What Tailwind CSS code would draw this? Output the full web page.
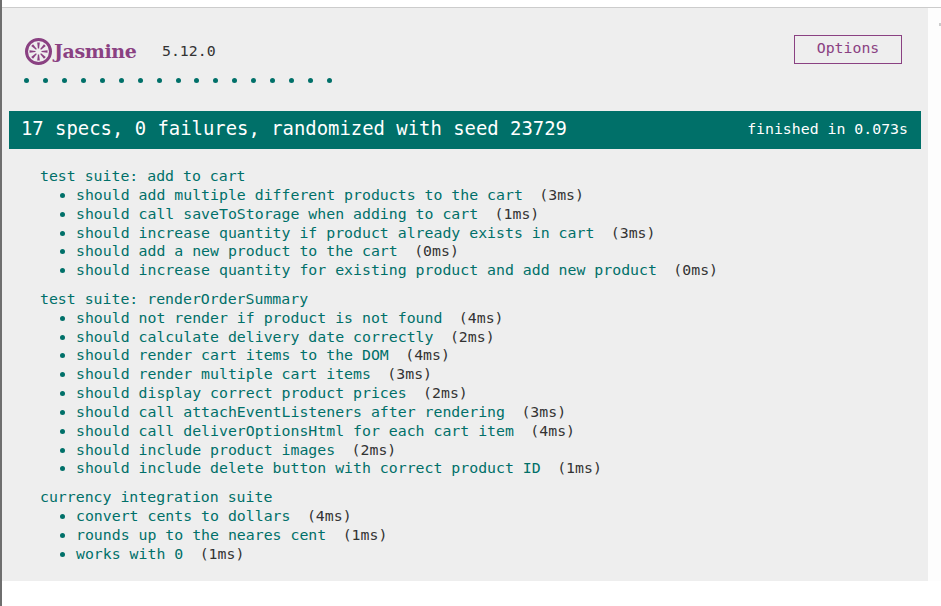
<!DOCTYPE html>
<html>
<head>
<meta charset="utf-8">
<script src="https://cdn.jsdelivr.net/npm/@tailwindcss/browser@4"></script>
</head>
<body class="bg-white">
<div class="h-[606px] w-[941px] overflow-hidden flex bg-white font-['DejaVu_Sans_Mono',monospace] text-[14.85px] leading-[18.85px] text-[#333]">
  <div class="w-[2px] bg-[#6e6e6e] shrink-0"></div>
  <div class="flex-1 flex flex-col pt-[7px]">
    <div class="flex border-t border-[#ccc]">
      <main class="w-[926px] h-[573px] bg-[#eee] px-[7px]">
        <header class="flex justify-between h-[103px] pl-[15px] pr-[19px] pt-[27px]">
          <div class="pt-[1px]">
            <div class="flex items-center h-[30px]">
              <svg width="28" height="28" viewBox="0 0 28 28" class="shrink-0 translate-x-[0.5px] translate-y-[0.5px]">
                <circle cx="14" cy="14" r="12" fill="none" stroke="#8a4182" stroke-width="3"/>
                <g fill="#8a4182">
                  <path d="M12.7 5 H15.3 L14.6 11 H13.4 Z"/>
                  <path d="M12.7 5 H15.3 L14.6 11 H13.4 Z" transform="rotate(45 14 14)"/>
                  <path d="M12.7 5 H15.3 L14.6 11 H13.4 Z" transform="rotate(90 14 14)"/>
                  <path d="M12.7 5 H15.3 L14.6 11 H13.4 Z" transform="rotate(135 14 14)"/>
                  <path d="M12.7 5 H15.3 L14.6 11 H13.4 Z" transform="rotate(180 14 14)"/>
                  <path d="M12.7 5 H15.3 L14.6 11 H13.4 Z" transform="rotate(225 14 14)"/>
                  <path d="M12.7 5 H15.3 L14.6 11 H13.4 Z" transform="rotate(270 14 14)"/>
                  <path d="M12.7 5 H15.3 L14.6 11 H13.4 Z" transform="rotate(315 14 14)"/>
                </g>
              </svg>
              <span class="ml-[1px] pl-[1px] w-[109px] font-['DejaVu_Serif',serif] font-bold text-[19px] tracking-[-0.4px] text-[#8a4182]">Jasmine</span>
              <span>5.12.0</span>
            </div>
            <ul class="flex gap-[13.95px] mt-[12px]">
              <li class="size-[5px] rounded-full bg-[#007069]"></li><li class="size-[5px] rounded-full bg-[#007069]"></li><li class="size-[5px] rounded-full bg-[#007069]"></li><li class="size-[5px] rounded-full bg-[#007069]"></li><li class="size-[5px] rounded-full bg-[#007069]"></li><li class="size-[5px] rounded-full bg-[#007069]"></li><li class="size-[5px] rounded-full bg-[#007069]"></li><li class="size-[5px] rounded-full bg-[#007069]"></li><li class="size-[5px] rounded-full bg-[#007069]"></li><li class="size-[5px] rounded-full bg-[#007069]"></li><li class="size-[5px] rounded-full bg-[#007069]"></li><li class="size-[5px] rounded-full bg-[#007069]"></li><li class="size-[5px] rounded-full bg-[#007069]"></li><li class="size-[5px] rounded-full bg-[#007069]"></li><li class="size-[5px] rounded-full bg-[#007069]"></li><li class="size-[5px] rounded-full bg-[#007069]"></li><li class="size-[5px] rounded-full bg-[#007069]"></li>
            </ul>
          </div>
          <button class="w-[108px] h-[29px] pb-[2px] border border-[#8a4182] text-[#8a4182] text-center">Options</button>
        </header>
        <div class="h-[38px] bg-[#007069] text-white flex items-center justify-between pl-[12px] pr-[13px]">
          <span class="text-[18.9px] pb-[4px] whitespace-pre">17 specs, 0 failures, randomized with seed 23729</span>
          <span class="pb-[2px]">finished in 0.073s</span>
        </div>
        <section class="pt-[18px] pl-[31px] text-[#007069]">
          <div class="mb-[9.8px]">
            <h2>test suite: add to cart</h2>
            <ul class="ml-[36px] list-disc">
              <li>should add multiple different products to the cart <span class="text-[#333] ml-[7.5px]">(3ms)</span></li>
              <li>should call saveToStorage when adding to cart <span class="text-[#333] ml-[7.5px]">(1ms)</span></li>
              <li>should increase quantity if product already exists in cart <span class="text-[#333] ml-[7.5px]">(3ms)</span></li>
              <li>should add a new product to the cart <span class="text-[#333] ml-[7.5px]">(0ms)</span></li>
              <li>should increase quantity for existing product and add new product <span class="text-[#333] ml-[7.5px]">(0ms)</span></li>
            </ul>
          </div>
          <div class="mb-[9.8px]">
            <h2>test suite: renderOrderSummary</h2>
            <ul class="ml-[36px] list-disc">
              <li>should not render if product is not found <span class="text-[#333] ml-[7.5px]">(4ms)</span></li>
              <li>should calculate delivery date correctly <span class="text-[#333] ml-[7.5px]">(2ms)</span></li>
              <li>should render cart items to the DOM <span class="text-[#333] ml-[7.5px]">(4ms)</span></li>
              <li>should render multiple cart items <span class="text-[#333] ml-[7.5px]">(3ms)</span></li>
              <li>should display correct product prices <span class="text-[#333] ml-[7.5px]">(2ms)</span></li>
              <li>should call attachEventListeners after rendering <span class="text-[#333] ml-[7.5px]">(3ms)</span></li>
              <li>should call deliverOptionsHtml for each cart item <span class="text-[#333] ml-[7.5px]">(4ms)</span></li>
              <li>should include product images <span class="text-[#333] ml-[7.5px]">(2ms)</span></li>
              <li>should include delete button with correct product ID <span class="text-[#333] ml-[7.5px]">(1ms)</span></li>
            </ul>
          </div>
          <div>
            <h2>currency integration suite</h2>
            <ul class="ml-[36px] list-disc">
              <li>convert cents to dollars <span class="text-[#333] ml-[7.5px]">(4ms)</span></li>
              <li>rounds up to the neares cent <span class="text-[#333] ml-[7.5px]">(1ms)</span></li>
              <li>works with 0 <span class="text-[#333] ml-[7.5px]">(1ms)</span></li>
            </ul>
          </div>
        </section>
      </main>
      <aside class="flex-1 h-[573px] bg-[#fdfdfd] pt-[15px] flex justify-end items-start">
        <div class="w-[2px] h-[3px] bg-[#ccc]"></div>
      </aside>
    </div>
  </div>
</div>
</body>
</html>
